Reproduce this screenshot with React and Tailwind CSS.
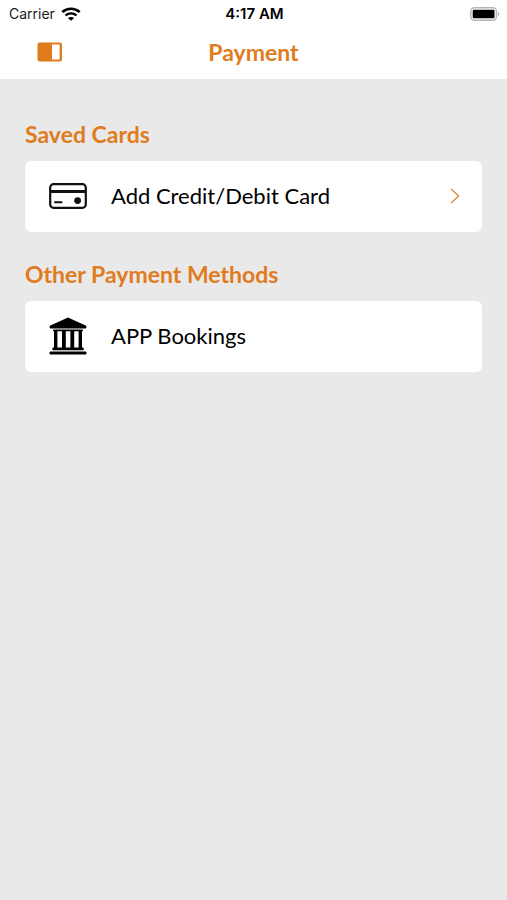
import { useState } from 'react';

function StatusBar() {
  return (
    <div className="grid grid-cols-3 items-center h-[27px] pl-[9px] pr-[7px] font-['Inter',sans-serif] text-sm text-[#1c1c1c]">
      <div className="flex items-center gap-[6px]">
        <span>Carrier</span>
        <svg width="20" height="14" viewBox="0 0 18 14" preserveAspectRatio="none" fill="none" aria-hidden="true">
          <path d="M1.2 5.1 C5.6 0.7 12.4 0.7 16.8 5.1" stroke="#000" strokeWidth="2.4" />
          <path d="M4.1 8.5 C6.9 5.7 11.1 5.7 13.9 8.5" stroke="#000" strokeWidth="2.3" />
          <path d="M9 13.8 L6.2 11.1 C7.8 9.6 10.2 9.6 11.8 11.1 Z" fill="#000" />
        </svg>
      </div>
      <span className="text-center text-[15px] font-semibold text-black">4:17 AM</span>
      <div className="flex justify-end">
        <svg width="30" height="14" viewBox="0 0 30 14" aria-hidden="true">
          <rect x="0.8" y="0.8" width="25.6" height="12.4" rx="3.6" fill="#fff" stroke="#b4b4b4" strokeWidth="1.4" />
          <rect x="2.7" y="2.7" width="21.8" height="8.6" rx="1.2" fill="#000" />
          <path d="M27.9 4.8 C29.9 5.6 29.9 8.4 27.9 9.2 Z" fill="#b4b4b4" />
        </svg>
      </div>
    </div>
  );
}

function MenuIcon() {
  return (
    <svg width="26" height="20" viewBox="0 0 26 20" aria-hidden="true">
      <rect x="0.5" y="0.5" width="24.5" height="19" rx="2.2" fill="#e07c1d" />
      <rect x="15" y="2.6" width="7.6" height="14.8" rx="0.6" fill="#fff" />
    </svg>
  );
}

function CardIcon() {
  return (
    <svg width="38" height="26" viewBox="0 0 38 26" fill="none" aria-hidden="true">
      <rect x="1.2" y="1.2" width="35.6" height="23.6" rx="3.4" stroke="#111" strokeWidth="2.2" />
      <path d="M1.5 8.4 H36.5" stroke="#111" strokeWidth="3" />
      <path d="M6 19.2 H12.6" stroke="#111" strokeWidth="1.9" strokeLinecap="round" />
      <circle cx="28.6" cy="17.6" r="3.4" fill="#111" />
    </svg>
  );
}

function BankIcon() {
  return (
    <svg width="38" height="38" viewBox="0 0 38 38" aria-hidden="true">
      <path d="M19 0.6 L36.6 8.6 Q37.4 9 37.4 9.8 V10.6 Q37.4 11.4 36.6 11.4 H1.4 Q0.6 11.4 0.6 10.6 V9.8 Q0.6 9 1.4 8.6 Z" fill="#000" />
      <rect x="4" y="12.4" width="30" height="1.8" rx="0.8" fill="#000" />
      <path d="M5 13.5 H8.4 V31.5 H5 Z M13 13.5 H16.8 V31.5 H13 Z M21.4 13.5 H25.2 V31.5 H21.4 Z M29.6 13.5 H33 V31.5 H29.6 Z" fill="#000" />
      <rect x="3.4" y="30.4" width="31.4" height="2.8" rx="1" fill="#000" />
      <rect x="0.6" y="34.4" width="36.8" height="3.2" rx="1.2" fill="#000" />
    </svg>
  );
}

function Chevron() {
  return (
    <svg width="10" height="16" viewBox="0 0 10 16" fill="none" aria-hidden="true">
      <path d="M1.2 1 L8.6 8 L1.2 15" stroke="#e2903c" strokeWidth="1.5" />
    </svg>
  );
}

const sections = [
  {
    title: 'Saved Cards',
    items: [{ id: 'add-card', label: 'Add Credit/Debit Card', icon: CardIcon, chevron: true }]
  },
  {
    title: 'Other Payment Methods',
    items: [{ id: 'app-bookings', label: 'APP Bookings', icon: BankIcon, chevron: false }]
  }
];

export default function App() {
  const [selected, setSelected] = useState(null);

  return (
    <div className="flex flex-col min-h-screen bg-[#e9e9e9] font-['Lato',sans-serif]">
      <header className="bg-white">
        <StatusBar />
        <div className="grid grid-cols-3 items-center h-[52px] pb-[2px] px-[37px]">
          <button type="button" aria-label="Menu" className="justify-self-start">
            <MenuIcon />
          </button>
          <h1 className="text-center text-[23px] leading-7 font-bold text-[#e07c1d]">Payment</h1>
        </div>
      </header>

      {/* Payment methods */}
      <main className="flex flex-col gap-7 px-[25px] pt-[41px]">
        {sections.map((section) => (
          <section key={section.title}>
            <h2 className="text-[23px] leading-7 font-bold text-[#e07c1d] mb-[13px]">{section.title}</h2>
            {section.items.map((item) => (
              <button
                key={item.id}
                type="button"
                aria-pressed={selected === item.id}
                onClick={() => setSelected(item.id)}
                className="flex items-center w-full h-[71px] pl-6 pr-[22px] pb-[2px] bg-white rounded-md text-left"
              >
                <item.icon />
                <span className="flex-1 ml-6 text-[22px] leading-7 text-black">{item.label}</span>
                {item.chevron && <Chevron />}
              </button>
            ))}
          </section>
        ))}
      </main>
    </div>
  );
}
